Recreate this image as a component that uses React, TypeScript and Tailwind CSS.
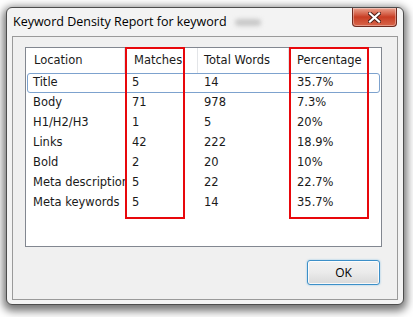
import React from "react";

type Row = { location: string; matches: string; total: string; pct: string };

const ROWS: Row[] = [
  { location: "Title", matches: "5", total: "14", pct: "35.7%" },
  { location: "Body", matches: "71", total: "978", pct: "7.3%" },
  { location: "H1/H2/H3", matches: "1", total: "5", pct: "20%" },
  { location: "Links", matches: "42", total: "222", pct: "18.9%" },
  { location: "Bold", matches: "2", total: "20", pct: "10%" },
  { location: "Meta description", matches: "5", total: "22", pct: "22.7%" },
  { location: "Meta keywords", matches: "5", total: "14", pct: "35.7%" },
];

const COLS = "grid grid-cols-[99px_73px_91px_81px]";

function CloseButton() {
  return (
    <div className="w-[45px] h-[19px] rounded-b-[4px] border border-[#6e2a1f] border-t-0 bg-gradient-to-b from-[#eaa28f] via-[#c83d23] to-[#d8654a] flex items-center justify-center shadow-[inset_0_0_0_1px_rgba(255,255,255,0.35)]">
      <svg width="13" height="11" viewBox="0 0 13 11">
        <path
          d="M2 1.5 L11 9.5 M11 1.5 L2 9.5"
          stroke="#4a1d16"
          strokeWidth="4"
          strokeLinecap="square"
        />
        <path
          d="M2 1.5 L11 9.5 M11 1.5 L2 9.5"
          stroke="#ffffff"
          strokeWidth="2.2"
          strokeLinecap="square"
        />
      </svg>
    </div>
  );
}

function ReportList() {
  return (
    <div className="relative w-[357px] h-[200px] bg-white border border-[#828790] font-['DejaVu_Sans',sans-serif] text-[11.5px] text-[#1a1a1a]">
      {/* column header */}
      <div className={`${COLS} h-[25px] items-center`}>
        <div className="pl-[8px] border-r border-[#e3e5e8] h-full flex items-center">Location</div>
        <div className="pl-[9px] border-r border-[#e3e5e8] h-full flex items-center">Matches</div>
        <div className="pl-[6px] border-r border-[#e3e5e8] h-full flex items-center">Total Words</div>
        <div className="pl-[8px] h-full flex items-center">Percentage</div>
      </div>

      {/* rows */}
      <div className="flex flex-col">
        {ROWS.map((r, i) => (
          <div
            key={r.location}
            className={`${COLS} h-[20px] items-center mx-[1px] border ${
              i === 0 ? "rounded-[3px] border-[#7da2ce]" : "border-transparent"
            }`}
          >
            <div className="pl-[5px] whitespace-nowrap overflow-hidden">{r.location}</div>
            <div className="pl-[5px]">{r.matches}</div>
            <div className="pl-[4px]">{r.total}</div>
            <div className="pl-[6px]">{r.pct}</div>
          </div>
        ))}
      </div>

      {/* highlight boxes */}
      <div className="absolute left-[99px] top-[-1px] w-[60px] h-[172px] border-2 border-[#e8080c]" />
      <div className="absolute left-[263px] top-[-1px] w-[80px] h-[172px] border-2 border-[#e8080c]" />
    </div>
  );
}

export default function App() {
  return (
    <div className="w-[413px] h-[317px] bg-white overflow-hidden">
      <div className="ml-[6px] mt-[7px] w-[398px] h-[298px] rounded-[6px] border border-[#4d4d4d] bg-[#f3f3f3] shadow-[0_3px_9px_3px_rgba(0,0,0,0.55)] flex flex-col">
        {/* title bar */}
        <div className="h-[28px] flex items-start justify-between pl-[6px] pr-[6px]">
          <div className="flex items-center h-[28px] pt-[1px] gap-[8px] font-['Open_Sans',sans-serif] text-[12.5px] text-black">
            <span>Keyword Density Report for keyword</span>
            <span className="w-[26px] h-[7px] rounded-full bg-[#c8c8c8] blur-[2px]" />
          </div>
          <CloseButton />
        </div>

        {/* client area */}
        <div className="mx-[5px] h-[264px] border border-[#9a9a9a] bg-[#f0f0f0] flex flex-col">
          <div className="pl-[12px] pt-[10px]">
            <ReportList />
          </div>
          <div className="flex justify-end pr-[17px] pt-[13px]">
            <button className="w-[73px] h-[25px] rounded-[3px] border border-[#3c8fc8] bg-gradient-to-b from-[#f2f2f2] via-[#ebebeb] to-[#d9d9d9] shadow-[inset_0_0_0_1px_rgba(255,255,255,0.8),0_0_2px_rgba(60,160,220,0.6)] font-['Open_Sans',sans-serif] text-[12px] text-black">
              OK
            </button>
          </div>
        </div>
      </div>
    </div>
  );
}
